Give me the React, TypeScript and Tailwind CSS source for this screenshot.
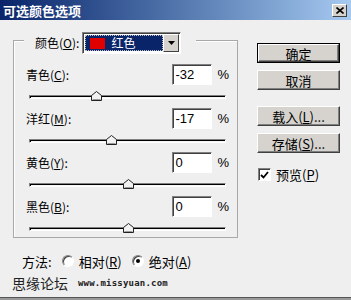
import React from 'react';

const rows = [
  { label: '青色', hotkey: 'C', value: -32 },
  { label: '洋红', hotkey: 'M', value: -17 },
  { label: '黄色', hotkey: 'Y', value: 0 },
  { label: '黑色', hotkey: 'B', value: 0 },
];

const TRACK_WIDTH = 197;

const Slider = ({ value }: { value: number }) => {
  const left = ((value + 100) / 200) * TRACK_WIDTH - 5;
  return (
    <div className="relative ml-[15px] flex h-[23px] w-[197px] items-center">
      <div className="h-[4px] w-full border border-t-[#808080] border-l-[#808080] border-b-white border-r-white bg-[#f4f4f4] shadow-[inset_1px_1px_0_#000]" />
      <svg className="absolute top-[6px]" style={{ left }} width="11" height="10" viewBox="0 0 11 10">
        <polygon points="0.5,9.5 0.5,4.5 5.5,0.5 10.5,4.5 10.5,9.5" fill="#f2f2f2" stroke="#222" />
        <line x1="1.5" y1="8.5" x2="9.5" y2="8.5" stroke="#9a9a9a" />
      </svg>
    </div>
  );
};

const Button = ({ children, primary }: { children: React.ReactNode; primary?: boolean }) => (
  <div className={primary ? 'border border-black' : ''}>
    <div
      className={
        'flex items-center justify-center border border-t-white border-l-white border-b-[#404040] border-r-[#404040] bg-[#d6d3ce] text-[13px] text-black shadow-[inset_-1px_-1px_0_#808080] ' +
        (primary ? 'h-[18px]' : 'h-[20px]')
      }
    >
      {children}
    </div>
  </div>
);

const Radio = ({ checked }: { checked?: boolean }) => (
  <div className="flex h-[12px] w-[12px] items-center justify-center rounded-full border border-t-[#808080] border-l-[#808080] border-b-white border-r-white bg-white shadow-[inset_1px_1px_0_#404040]">
    {checked && <div className="h-[4px] w-[4px] rounded-full bg-black" />}
  </div>
);

export default function App() {
  return (
    <div className="flex h-[300px] w-[351px] flex-col overflow-hidden bg-[#efefef] font-['Noto_Sans_CJK_SC','Liberation_Sans',sans-serif] text-[12px] leading-none text-black">
      {/* title bar */}
      <div className="flex h-[20px] items-center justify-between bg-gradient-to-r from-[#0a246a] to-[#a6caf0] pl-[3px] pr-[4px]">
        <span className="text-[13px] font-bold text-white">可选颜色选项</span>
        <div className="flex h-[13px] w-[15px] items-center justify-center border border-t-white border-l-white border-b-[#404040] border-r-[#404040] bg-[#d6d3ce]">
          <svg width="8" height="7" viewBox="0 0 8 7">
            <path d="M0.5 0.5 L7.5 6.5 M7.5 0.5 L0.5 6.5" stroke="#000" strokeWidth="1.6" />
          </svg>
        </div>
      </div>

      <div className="flex">
        {/* left: adjustments */}
        <div className="pl-[13px] pt-[20px]">
          <div className="h-[198px] w-[225px] border border-[#a8a8a8] shadow-[inset_1px_1px_0_#fff]">
            <div className="-mt-[9px] ml-[10px] flex h-[22px] w-[172px] items-center bg-[#efefef] pl-[11px]">
              <span>
                颜色(<u>O</u>):
              </span>
              <div className="ml-[3px] flex h-[22px] w-[99px] items-center border border-t-[#808080] border-l-[#808080] border-b-white border-r-white bg-white shadow-[inset_1px_1px_0_#404040]">
                <div className="ml-[2px] flex h-[16px] flex-1 items-center border border-dotted border-[#c0c0c0] bg-[#0a246a] pl-[4px]">
                  <div className="h-[11px] w-[15px] bg-[#e00000]" />
                  <span className="ml-[6px] text-white">红色</span>
                </div>
                <div className="mr-[1px] flex h-[18px] w-[16px] items-center justify-center border border-t-white border-l-white border-b-[#404040] border-r-[#404040] bg-[#d6d3ce]">
                  <svg width="7" height="4" viewBox="0 0 7 4">
                    <polygon points="0,0 7,0 3.5,4" fill="#000" />
                  </svg>
                </div>
              </div>
            </div>

            <div className="mt-[10px] flex flex-col">
              {rows.map((row) => (
                <div key={row.hotkey} className="h-[44px]">
                  <div className="flex h-[21px] items-center pl-[12px] pr-[8px]">
                    <span className="flex-1 text-[12px]">
                      {row.label}(<u>{row.hotkey}</u>):
                    </span>
                    <div className="flex h-[21px] w-[40px] items-center border border-t-[#808080] border-l-[#808080] border-b-white border-r-white bg-white pl-[2px] font-['Liberation_Sans',sans-serif] text-[13px] shadow-[inset_1px_1px_0_#404040]">
                      {row.value}
                    </div>
                    <span className="ml-[5px] font-['Liberation_Sans',sans-serif] text-[13px]">%</span>
                  </div>
                  <Slider value={row.value} />
                </div>
              ))}
            </div>
          </div>
        </div>

        {/* right: buttons */}
        <div className="ml-[19px] flex w-[83px] flex-col pt-[23px]">
          <Button primary>确定</Button>
          <div className="mt-[7px]">
            <Button>取消</Button>
          </div>
          <div className="mt-[16px]">
            <Button>
              载入(<u>L</u>)...
            </Button>
          </div>
          <div className="mt-[7px]">
            <Button>
              存储(<u>S</u>)...
            </Button>
          </div>
          <div className="mt-[15px] flex items-center pl-[1px]">
            <div className="flex h-[13px] w-[13px] items-center justify-center border border-t-[#808080] border-l-[#808080] border-b-white border-r-white bg-white shadow-[inset_1px_1px_0_#404040]">
              <svg width="9" height="8" viewBox="0 0 9 8">
                <path d="M1 4 L3.5 6.5 L8 1" stroke="#000" strokeWidth="1.8" fill="none" />
              </svg>
            </div>
            <span className="ml-[5px] text-[13px]">
              预览(<u>P</u>)
            </span>
          </div>
        </div>
      </div>

      {/* method */}
      <div className="mt-[16px] flex h-[14px] items-center pl-[22px] text-[13px]">
        <span>方法:</span>
        <div className="ml-[10px]">
          <Radio />
        </div>
        <span className="ml-[5px]">
          相对(<u>R</u>)
        </span>
        <div className="ml-[10px]">
          <Radio checked />
        </div>
        <span className="ml-[5px]">
          绝对(<u>A</u>)
        </span>
      </div>

      <div className="mt-[8px] flex items-center pl-[12px]">
        <span className="text-[14px] text-[#222]">思缘论坛</span>
        <span className="ml-[10px] font-['DejaVu_Sans_Mono',monospace] text-[9px] font-bold tracking-[0.2px] text-[#222]">
          www.missyuan.com
        </span>
      </div>

      <div className="mt-auto h-[3px] border-t border-[#555] bg-[#9a9a9a]" />
    </div>
  );
}
